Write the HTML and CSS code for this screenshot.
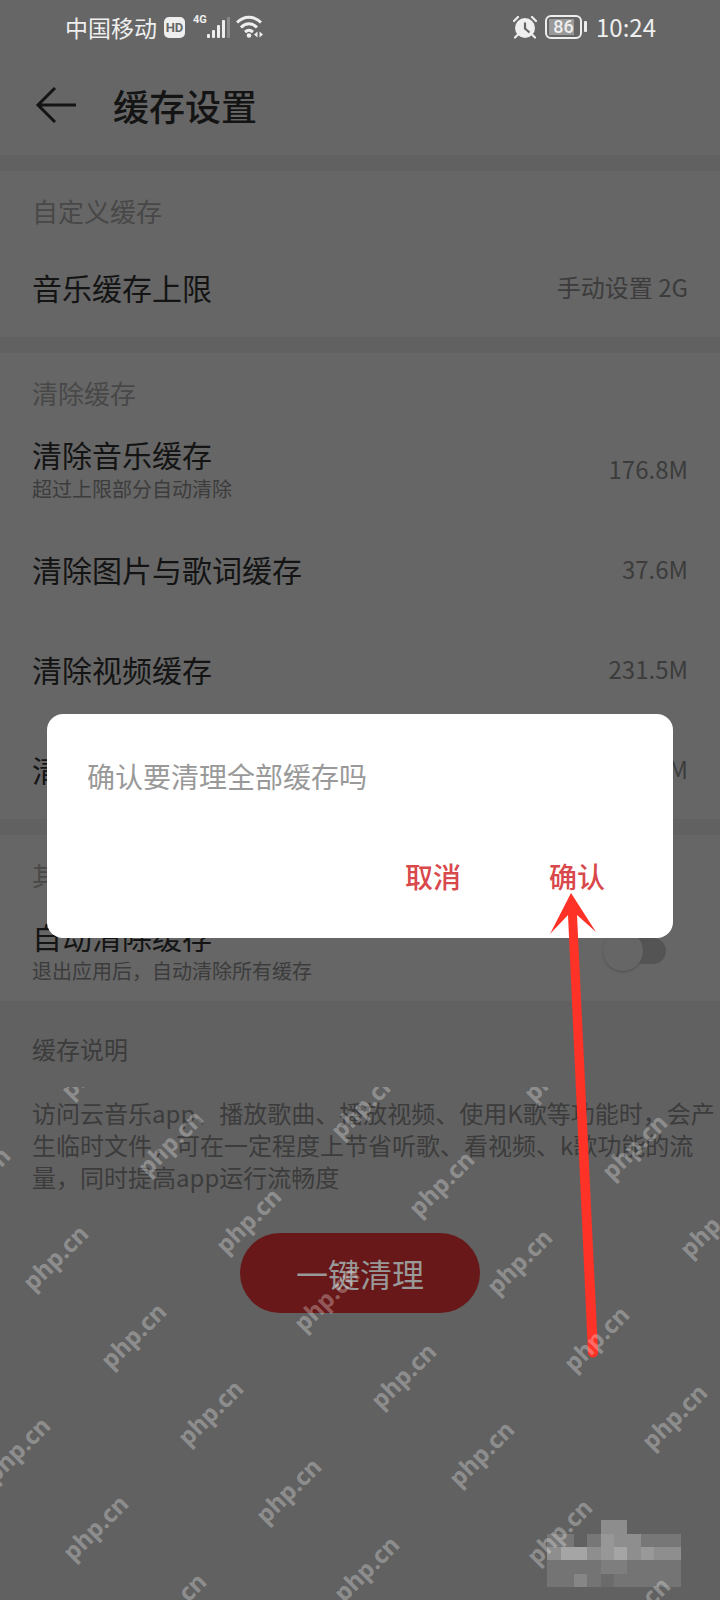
FILE: index.html
```html
<!DOCTYPE html>
<html lang="zh-CN">
<head>
<meta charset="utf-8">
<meta name="viewport" content="width=device-width, initial-scale=1">
<title>缓存设置</title>
<link rel="stylesheet" href="styles.css">
</head>
<body>
<div class="screen">
  <div class="status-bar">
    <div class="status-group">
      <span class="carrier">中国移动</span>
      <span class="hd">HD</span>
      <span class="network">4G</span>
      <svg class="signal" width="24" height="23" viewBox="0 0 24 23" fill="#eee">
        <rect x="0" y="18" width="3" height="4" rx="1"/><rect x="5" y="14" width="3" height="8" rx="1"/><rect x="10" y="9" width="3" height="13" rx="1"/><rect x="15" y="4" width="3" height="18" rx="1"/><rect x="20" y="1" width="3" height="21" rx="1" fill="#8a8a8a"/>
      </svg>
      <svg class="wifi" width="28" height="24" viewBox="0 0 28 24" fill="none" stroke="#eee" stroke-width="3">
        <path d="M1 7.500C8 .5 18 .5 25 7.500"/><path d="M5 12.500c5-5 11-5 16 0"/><path d="M9 17c3-2.500 5-2.500 8 0"/>
        <circle cx="13" cy="20.500" r="2.300" fill="#eee" stroke="none"/>
        <path d="M21.500 16.500v6l-3.500-3zM23.500 16.500v6l3.500-3z" fill="#eee" stroke="none"/>
      </svg>
    </div>
    <div class="status-group">
      <svg class="alarm" width="24" height="23" viewBox="0 0 24 23">
        <circle cx="12" cy="12" r="10" fill="#eee"/>
        <path d="M1 5l4-4M19 1l4 4M4.500 19l-2.500 2.500M19.500 19l2.500 2.500" stroke="#eee" stroke-width="2.200" stroke-linecap="round"/>
        <path d="M12 6.500v6l4.500 4" fill="none" stroke="#666" stroke-width="2.200"/>
      </svg>
      <span class="battery"><span class="battery-level">86</span></span>
      <span class="clock">10:24</span>
    </div>
  </div>

  <header class="title-bar">
    <button class="back" type="button" aria-label="返回">
      <svg width="42" height="36" viewBox="0 0 42 36" fill="none" stroke="#141414" stroke-width="3"><path d="M41 18H3M20 1L3 18l17 17"/></svg>
    </button>
    <h1 class="title">缓存设置</h1>
  </header>

  <main>
    <section class="group">
      <h2 class="group-label">自定义缓存</h2>
      <div class="row"><span class="row-title">音乐缓存上限</span><span class="row-value">手动设置 2G</span></div>
    </section>
    <section class="group">
      <h2 class="group-label">清除缓存</h2>
      <div class="row">
        <div class="row-text"><span class="row-title">清除音乐缓存</span><span class="row-note">超过上限部分自动清除</span></div>
        <span class="row-value">176.8M</span>
      </div>
      <div class="row"><span class="row-title">清除图片与歌词缓存</span><span class="row-value">37.6M</span></div>
      <div class="row"><span class="row-title">清除视频缓存</span><span class="row-value">231.5M</span></div>
      <div class="row"><span class="row-title">清除</span><span class="row-value">M</span></div>
    </section>
    <section class="group">
      <h2 class="group-label">其他</h2>
      <div class="row">
        <label class="row-text" for="auto"><span class="row-title">自动清除缓存</span><span class="row-note">退出应用后，自动清除所有缓存</span></label>
        <input class="switch" id="auto" type="checkbox">
      </div>
    </section>
    <section class="about">
      <h2 class="about-title">缓存说明</h2>
      <p class="about-text">访问云音乐app、播放歌曲、播放视频、使用K歌等功能时，会产<br>生临时文件，可在一定程度上节省听歌、看视频、k歌功能的流<br>量，同时提高app运行流畅度</p>
      <button class="clean" type="button">一键清理</button>
    </section>
  </main>

  <div class="overlay">
    <div class="dialog" role="dialog" aria-labelledby="question">
      <p class="question" id="question">确认要清理全部缓存吗</p>
      <div class="actions">
        <button class="action" type="button">取消</button>
        <button class="action" type="button">确认</button>
      </div>
    </div>
  </div>

  <svg class="canvas" width="720" height="1600" viewBox="0 0 720 1600" aria-hidden="true">
    <path d="M571 893L596 932L577 915L598 1352a5 5 0 0 1-10 1L568 915L550 934Z" fill="#fe3226"/>
    <g shape-rendering="crispEdges">
      <path fill="#8d8d8d" d="M601 1520h26v14h-26z"/>
      <path fill="#777" d="M547 1534h27v13h-27zM587 1534h14v13h-14zM641 1534h40v13h-40z"/>
      <path fill="#979797" d="M601 1534h13v26h-13z"/>
      <path fill="#8e8e8e" d="M614 1534h27v13h-27zM547 1547h14v13h-14zM587 1547h14v13h-14zM627 1547h14v13h-14zM654 1547h27v13h-27z"/>
      <path fill="#a5a5a5" d="M561 1547h26v13h-26zM614 1547h13v13h-13z"/>
      <path fill="#999" d="M641 1547h13v13h-13z"/>
      <path fill="#747474" d="M547 1560h134v27h-134z"/>
      <path fill="#7e7e7e" d="M601 1560h26v14h-26z"/>
      <path fill="#868686" d="M574 1574h13v13h-13z"/>
      <path fill="#6b6b6b" d="M601 1574h13v13h-13z"/>
    </g>
    <clipPath id="lower"><path d="M0 1087h720v513H0z"/></clipPath>
    <g class="marks" clip-path="url(#lower)">
      <text transform="translate(-21 1181) rotate(-45)">php.cn</text>
      <text transform="translate(57 1259) rotate(-45)">php.cn</text>
      <text transform="translate(135 1337) rotate(-45)">php.cn</text>
      <text transform="translate(212 1414) rotate(-45)">php.cn</text>
      <text transform="translate(290 1492) rotate(-45)">php.cn</text>
      <text transform="translate(368 1570) rotate(-45)">php.cn</text>
      <text transform="translate(95 1067) rotate(-45)">php.cn</text>
      <text transform="translate(172 1144) rotate(-45)">php.cn</text>
      <text transform="translate(250 1222) rotate(-45)">php.cn</text>
      <text transform="translate(328 1300) rotate(-45)">php.cn</text>
      <text transform="translate(405 1377) rotate(-45)">php.cn</text>
      <text transform="translate(483 1455) rotate(-45)">php.cn</text>
      <text transform="translate(561 1533) rotate(-45)">php.cn</text>
      <text transform="translate(639 1611) rotate(-45)">php.cn</text>
      <text transform="translate(365 1107) rotate(-45)">php.cn</text>
      <text transform="translate(443 1185) rotate(-45)">php.cn</text>
      <text transform="translate(521 1263) rotate(-45)">php.cn</text>
      <text transform="translate(598 1340) rotate(-45)">php.cn</text>
      <text transform="translate(676 1418) rotate(-45)">php.cn</text>
      <text transform="translate(558 1070) rotate(-45)">php.cn</text>
      <text transform="translate(636 1148) rotate(-45)">php.cn</text>
      <text transform="translate(714 1226) rotate(-45)">php.cn</text>
      <text transform="translate(19 1451) rotate(-45)">php.cn</text>
      <text transform="translate(97 1529) rotate(-45)">php.cn</text>
      <text transform="translate(175 1607) rotate(-45)">php.cn</text>
    </g>
  </svg>
</div>
</body>
</html>
```
FILE: styles.css
```css
* { box-sizing: border-box; margin: 0; }
body {
  background: #616161;
  color: #141414;
  font-family: "Noto Sans CJK SC", "Noto Sans", sans-serif;
}
button { border: 0; padding: 0; background: none; font: inherit; }
svg { display: block; }

.screen { position: relative; min-height: 100vh; overflow: hidden; }

.status-bar {
  display: flex;
  justify-content: space-between;
  height: 54px;
  padding: 0 64px 0 65px;
  background: #666;
  color: #eee;
}
.status-group { display: flex; align-items: center; }
.carrier { font-size: 23px; line-height: 32px; }
.hd {
  width: 21px;
  margin-left: 7px;
  border-radius: 5px;
  background: #eee;
  color: #666;
  font: 700 13px/21px Roboto, sans-serif;
  text-align: center;
}
.network { align-self: flex-start; margin: 13px 0 0 8px; font: 700 11px/14px Roboto, sans-serif; }
.wifi { margin-left: 5px; }
.battery {
  position: relative;
  margin: 0 8px;
  padding: 2px;
  border: 2px solid #eee;
  border-radius: 6px;
}
.battery::after {
  content: "";
  position: absolute;
  top: 4px;
  right: -7px;
  width: 3px;
  height: 11px;
  border-radius: 1px;
  background: #eee;
}
.battery-level {
  display: block;
  width: 29px;
  background: linear-gradient(to right, #999 86%, transparent 86%);
  font: 500 18px/16px Roboto, sans-serif;
  text-align: center;
}
.clock { margin-left: 6px; font-size: 24px; line-height: 32px; }

.title-bar {
  display: flex;
  align-items: center;
  gap: 36px;
  height: 101px;
  padding: 0 35px;
  background: #666;
}
.title { font-size: 36px; font-weight: 500; line-height: 48px; }

.group { border-top: 16px solid #616161; background: #666; }
.group-label {
  height: 66px;
  padding: 20px 32px 0;
  color: #484848;
  font-size: 26px;
  font-weight: 400;
  line-height: 40px;
}
.row {
  display: flex;
  align-items: center;
  justify-content: space-between;
  height: 100px;
  padding: 0 32px;
}
.row-text { display: flex; flex-direction: column; gap: 2px; }
.row-title { font-size: 30px; line-height: 38px; }
.row-note { color: #3c3c3c; font-size: 20px; line-height: 28px; }
.row-value { color: #3c3c3c; font-size: 24px; line-height: 32px; }

.switch {
  appearance: none;
  position: relative;
  width: 55px;
  height: 26px;
  margin: 0 22px 0 0;
  border-radius: 13px;
  background: #545454;
}
.switch::before {
  content: "";
  position: absolute;
  top: -7px;
  left: -8px;
  width: 40px;
  height: 40px;
  border-radius: 50%;
  background: #666;
  box-shadow: 0 1px 2px #505050;
}

.about {
  display: flex;
  flex-direction: column;
  padding: 32px 0 0 32px;
  color: #3c3c3c;
}
.about-title { font-size: 24px; font-weight: 400; line-height: 32px; }
.about-text { margin-top: 32px; font-size: 24px; line-height: 32px; }
.clean {
  align-self: center;
  width: 240px;
  height: 80px;
  margin: 40px 32px 0 0;
  border-radius: 40px;
  background: #681818;
  color: #999;
  font-size: 32px;
}

.overlay {
  position: absolute;
  inset: 0;
  display: flex;
  align-items: center;
  padding: 52px 47px 0;
}
.dialog { flex: 1; padding: 40px; border-radius: 16px; background: #fff; }
.question { color: #999; font-size: 28px; line-height: 44px; }
.actions { display: flex; justify-content: flex-end; gap: 88px; margin-top: 56px; padding-right: 28px; }
.action { color: #d9484b; font-size: 28px; font-weight: 500; line-height: 44px; }

.canvas { position: absolute; top: 0; left: 0; pointer-events: none; }
.marks {
  fill: #fff;
  fill-opacity: .3;
  font: 700 24px "Noto Sans", "Open Sans", sans-serif;
  text-anchor: middle;
  dominant-baseline: middle;
}
```
